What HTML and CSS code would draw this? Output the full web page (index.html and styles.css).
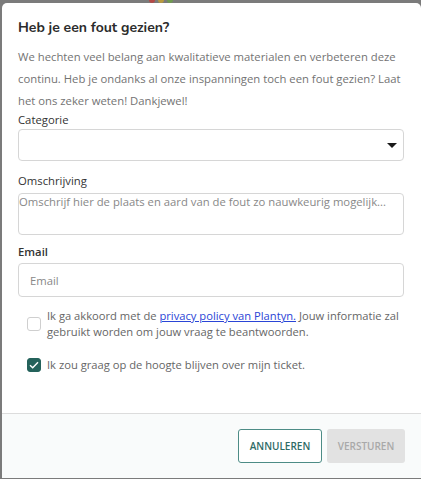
FILE: index.html
```html
<!DOCTYPE html>
<html lang="nl">
<head>
  <meta charset="UTF-8" />
  <meta name="viewport" content="width=device-width, initial-scale=1.0"/>
  <title>Heb je een fout gezien?</title>
  <link rel="stylesheet" href="styles.css">
</head>
<body>
  <div class="backdrop">
    <div class="dots">
      <span class="dot red"></span>
      <span class="dot orange"></span>
      <span class="dot green"></span>
    </div>

    <div class="modal">
      <div class="modal-body">
        <h2>Heb je een fout gezien?</h2>
        <p class="intro">We hechten veel belang aan kwalitatieve materialen en verbeteren deze continu. Heb je ondanks al onze inspanningen toch een fout gezien? Laat het ons zeker weten! Dankjewel!</p>

        <label class="field-label">Categorie</label>
        <div class="select">
          <span class="caret"></span>
        </div>

        <label class="field-label">Omschrijving</label>
        <textarea class="textarea" placeholder="Omschrijf hier de plaats en aard van de fout zo nauwkeurig mogelijk..."></textarea>

        <label class="field-label bold">Email</label>
        <input class="input" type="text" placeholder="Email"/>

        <div class="check-row first">
          <span class="box"></span>
          <span class="check-text">Ik ga akkoord met de <a href="#">privacy policy van Plantyn.</a> Jouw informatie zal gebruikt worden om jouw vraag te beantwoorden.</span>
        </div>

        <div class="check-row">
          <span class="box checked">
            <svg width="10" height="8" viewBox="0 0 10 8"><path d="M1 4.2 L3.7 6.8 L9 1.2" fill="none" stroke="white" stroke-width="1.4"/></svg>
          </span>
          <span class="check-text">Ik zou graag op de hoogte blijven over mijn ticket.</span>
        </div>
      </div>

      <div class="modal-footer">
        <button class="btn outline">ANNULEREN</button>
        <button class="btn disabled">VERSTUREN</button>
      </div>
    </div>
  </div>
</body>
</html>
```

FILE: styles.css
```css
html, body {
  margin: 0;
  height: 100%;
}

body {
  font-family: 'Open Sans', sans-serif;
  background: #7b7b7b;
}

.backdrop {
  position: relative;
  height: 100%;
  padding: 3px 0 1px 2px;
  box-sizing: border-box;
  display: flex;
}

.dots {
  position: absolute;
  top: -3px;
  left: 149px;
  display: flex;
  gap: 3px;
}

.dot {
  width: 6px;
  height: 6px;
  border-radius: 50%;
}
.dot.red { background: #b44a47; }
.dot.orange { background: #b99a3e; }
.dot.green { background: #6f9a4f; }

.modal {
  flex: 1;
  background: white;
  border-radius: 5px 5px 0 0;
  display: flex;
  flex-direction: column;
  overflow: hidden;
}

.modal-body {
  padding: 15px 17px 0 16px;
  flex: 1;
  display: flex;
  flex-direction: column;
}

h2 {
  margin: 0;
  font-family: 'Nunito', 'Open Sans', sans-serif;
  font-size: 14px;
  font-weight: 700;
  color: #2b2b2b;
  line-height: 20px;
}

.intro {
  margin: 8px 0 0;
  font-size: 11.3px;
  line-height: 22px;
  color: #737373;
}

.field-label {
  display: block;
  font-size: 11.3px;
  color: #333;
  margin-top: 0;
  line-height: 16px;
}
.field-label.bold { font-weight: 600; margin-top: 9px; }

.select {
  margin-top: 1px;
  height: 32px;
  border: 1px solid #d6d6d6;
  border-radius: 4px;
  position: relative;
  box-sizing: border-box;
}

.caret {
  position: absolute;
  right: 6px;
  top: 13px;
  width: 0;
  height: 0;
  border-left: 5px solid transparent;
  border-right: 5px solid transparent;
  border-top: 5px solid #1a1a1a;
}

.select + .field-label { margin-top: 12px; }

.textarea {
  margin-top: 4px;
  height: 42px;
  border: 1px solid #d6d6d6;
  border-radius: 4px;
  padding: 0;
  font-family: 'Open Sans', sans-serif;
  font-size: 11.3px;
  line-height: 16px;
  resize: none;
  box-sizing: border-box;
}
.textarea::placeholder { color: #888; }

.input {
  margin-top: 3px;
  height: 34px;
  border: 1px solid #d6d6d6;
  border-radius: 4px;
  padding: 0 11px;
  font-family: 'Open Sans', sans-serif;
  font-size: 11.3px;
  box-sizing: border-box;
}
.input::placeholder { color: #888; }

.check-row {
  display: flex;
  align-items: center;
  gap: 6px;
  padding-left: 9px;
  margin-top: 17px;
}
.check-row.first {
  margin-top: 11px;
}

.box {
  flex: none;
  width: 14px;
  height: 14px;
  border: 1px solid #cfcfcf;
  border-radius: 3px;
  box-sizing: border-box;
  display: flex;
  align-items: center;
  justify-content: center;
}
.box.checked {
  background: #24625b;
  border-color: #24625b;
}

.check-text {
  font-size: 11.2px;
  line-height: 16px;
  color: #666;
}

.check-text a {
  color: #2a45d6;
}

.modal-footer {
  height: 65px;
  border-top: 1px solid #dcdcdc;
  background: #f9fbfb;
  display: flex;
  justify-content: flex-end;
  align-items: center;
  gap: 5px;
  padding: 0 16px 0 0;
  box-sizing: border-box;
}

.btn {
  height: 34px;
  border-radius: 3px;
  font-family: 'Open Sans', sans-serif;
  font-size: 10px;
  font-weight: 600;
  padding: 0;
  box-sizing: border-box;
}

.btn.outline {
  width: 84px;
  background: white;
  border: 1px solid #4d8c86;
  color: #2f6b65;
}

.btn.disabled {
  width: 78px;
  background: #e2e2e2;
  border: none;
  color: #a9a9a9;
}
```
